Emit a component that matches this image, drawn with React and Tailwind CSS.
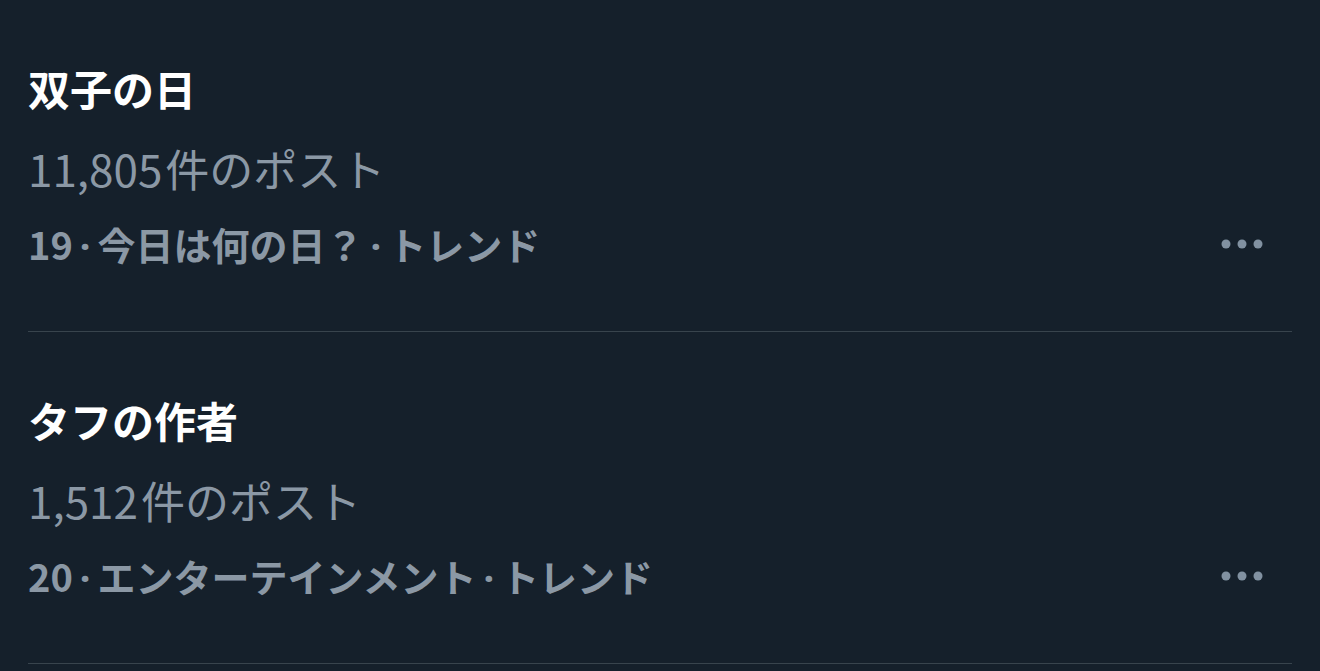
const trends = [
  { rank: 19, title: '双子の日', count: '11,805', category: '今日は何の日？' },
  { rank: 20, title: 'タフの作者', count: '1,512', category: 'エンターテインメント' },
];

function MoreIcon() {
  return (
    <svg width="44" height="10" viewBox="0 0 44 10" className="fill-[#8191a1]">
      <circle cx="5" cy="5" r="4.5" />
      <circle cx="21" cy="5" r="4.5" />
      <circle cx="37" cy="5" r="4.5" />
    </svg>
  );
}

function Dot() {
  return (
    <span className="mx-[7px]" style={{ fontFamily: '"Noto Sans", sans-serif' }}>
      ·
    </span>
  );
}

export default function App() {
  return (
    <div
      className="min-h-[671px] w-full bg-[#15202b] px-[28px]"
      style={{ fontFamily: '"Noto Sans CJK JP", "Noto Sans", sans-serif' }}
    >
      {trends.map((t) => (
        <div key={t.rank} className="border-b border-[#38444d] pt-[60px] pb-[63px]">
          <div className="text-[42px] font-bold leading-[56px] text-white">
            {t.title}
          </div>
          <div className="mt-[24px] text-[44px] leading-[56px] text-[#8b98a5]">
            {t.count}
            <span className="ml-[3px]">件のポスト</span>
          </div>
          <div className="mt-[24px] flex h-[48px] items-center justify-between pr-[27px]">
            <div className="text-[38px] font-bold leading-[48px] text-[#8b98a5]">
              {t.rank}
              <Dot />
              {t.category}
              <Dot />
              トレンド
            </div>
            <MoreIcon />
          </div>
        </div>
      ))}
    </div>
  );
}
